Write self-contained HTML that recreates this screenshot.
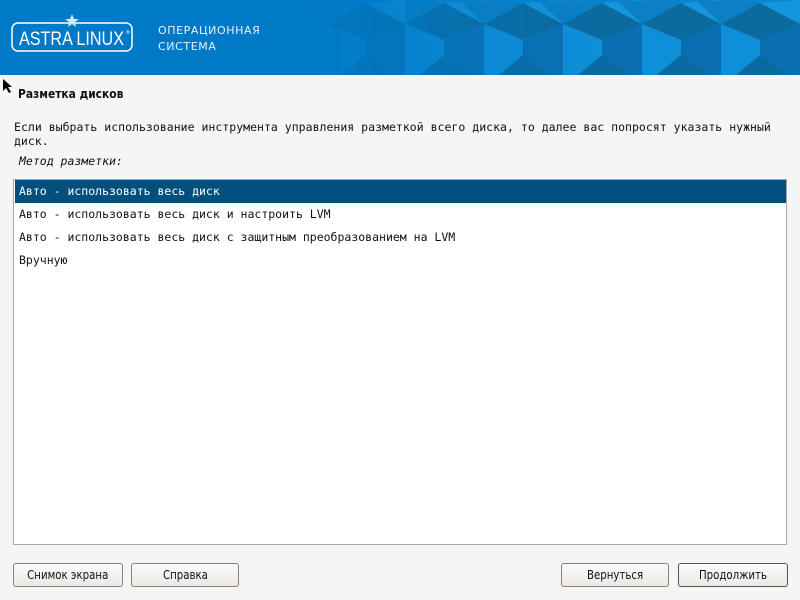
<!DOCTYPE html>
<html><head><meta charset="utf-8"><style>
body{margin:0;width:800px;height:600px;background:#f5f5f5;position:relative;overflow:hidden;font-family:"DejaVu Sans Mono","Liberation Mono",monospace;color:#111}
.hdr{position:absolute;left:0;top:0;width:800px;height:75px;background:#0079c6}
.t{position:absolute;white-space:nowrap;font-size:11.5px}
.list{position:absolute;left:13px;top:179px;width:772px;height:364px;background:#fff;border:1px solid #a8a8a8}
.row{position:absolute;left:1px;width:771px;height:23px;line-height:23px;padding-left:4px;font-size:11.5px;box-sizing:border-box}
.btn{position:absolute;top:563px;height:24px;border:1px solid #8a8078;border-radius:3px;background:linear-gradient(#fbfbfb,#ebe8e4);box-sizing:border-box;text-align:center;line-height:22px;font-family:"DejaVu Sans",sans-serif;font-size:12px;transform-origin:center}
.btn span{display:inline-block;transform:scaleX(.85)}
</style></head><body>
<div class="hdr">
<svg width="800" height="75" style="position:absolute;left:0;top:0">
<defs><linearGradient id="f" x1="0" x2="1"><stop offset="0" stop-color="#0079c6" stop-opacity="1"/><stop offset="0.35" stop-color="#0079c6" stop-opacity="0.3"/><stop offset="0.6" stop-color="#0079c6" stop-opacity="0"/></linearGradient></defs>
<g>
<polygon points="380,0 800,0 800,75 380,75" fill="#0a84cf"/>
<g id="p">
<polygon points="405,24 444,3 484,24 444,40" fill="#0b6a9e"/>
<polygon points="405,24 444,40 444,75 405,75" fill="#0f8fd8"/>
<polygon points="484,24 444,40 444,75 484,75" fill="#0a6fb0"/>
<polygon points="405,24 380,0 444,3" fill="#0d7fc4"/>
<polygon points="444,3 484,24 484,0" fill="#1595dc"/>
<polygon points="420,75 444,55 470,75" fill="#0a6aa0"/>
</g>
<use href="#p" x="79"/><use href="#p" x="158"/><use href="#p" x="237"/><use href="#p" x="316"/><use href="#p" x="-79"/>
</g>
<rect x="300" y="0" width="500" height="75" fill="url(#f)"/>
<rect x="12" y="23" width="120" height="28" rx="6" fill="none" stroke="#fff" stroke-width="1.5"/>
<text x="19" y="45" fill="#fff" font-family="Liberation Sans" font-size="19" textLength="105" lengthAdjust="spacingAndGlyphs">ASTRA LINUX</text>
<text x="126" y="34" fill="#fff" font-size="5" font-family="Liberation Sans">®</text>
<polygon points="72,14 74,19 79,19 75,22 76,27 72,24 68,27 69,22 65,19 70,19" fill="#cfe6f6"/>
<text x="158" y="34" fill="#e6f2fb" font-family="DejaVu Sans" font-size="11" letter-spacing="0.6">ОПЕРАЦИОННАЯ</text>
<text x="158" y="50" fill="#e6f2fb" font-family="DejaVu Sans" font-size="11" letter-spacing="0.6">СИСТЕМА</text>
</svg>
</div>
<svg width="10" height="14" style="position:absolute;left:2px;top:79px"><polygon points="1,0 1,12 4,9 7,14 9,13 6,8 10,8" fill="#000"/></svg>
<div class="t" style="left:18px;top:87px;font-weight:bold;font-family:'DejaVu Sans',sans-serif;font-size:12px"><span style="display:inline-block;transform:scaleX(.89);transform-origin:left">Разметка дисков</span></div>
<div class="t" style="left:14px;top:120px;letter-spacing:0.02px">Если выбрать использование инструмента управления разметкой всего диска, то далее вас попросят указать нужный</div>
<div class="t" style="left:14px;top:134px">диск.</div>
<div class="t" style="left:19px;top:154px;font-style:italic">Метод разметки:</div>
<div class="list">
<div class="row" style="top:0;background:#004f7d;color:#fff">Авто - использовать весь диск</div>
<div class="row" style="top:23px">Авто - использовать весь диск и настроить LVM</div>
<div class="row" style="top:46px">Авто - использовать весь диск с защитным преобразованием на LVM</div>
<div class="row" style="top:69px">Вручную</div>
</div>
<div class="btn" style="left:13px;width:110px"><span>Снимок экрана</span></div>
<div class="btn" style="left:131px;width:108px"><span>Справка</span></div>
<div class="btn" style="left:561px;width:108px"><span>Вернуться</span></div>
<div class="btn" style="left:678px;width:110px;border-color:#5a5048"><span>Продолжить</span></div>
</body></html>
